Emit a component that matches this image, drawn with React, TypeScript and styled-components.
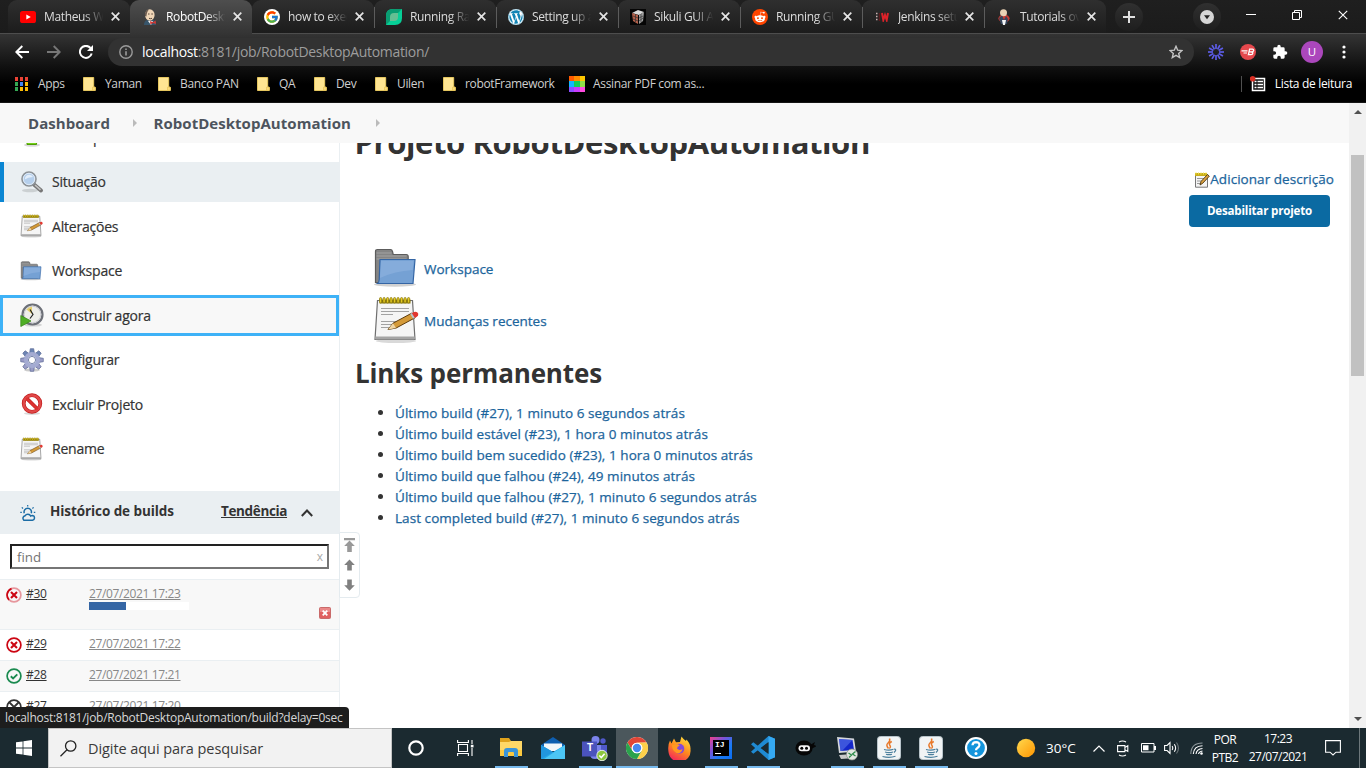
import React from "react";
import styled, { createGlobalStyle, css } from "styled-components";
import { FcGoogle } from "react-icons/fc";
import { FaWordpress, FaRedditAlien } from "react-icons/fa";

const UI = `"Open Sans", "Noto Sans", sans-serif`;

const Global = createGlobalStyle`
  * { box-sizing: border-box; }
  body { margin: 0; background: #fff; font-family: ${UI}; overflow: hidden; }
  svg { display: block; flex: none; }
  ul { margin: 0; padding: 0; }
`;

const Screen = styled.div`
  position: relative;
  width: 1366px;
  height: 768px;
  display: flex;
  flex-direction: column;
  overflow: hidden;
`;

/* ---------- browser chrome ---------- */

const TabStrip = styled.div`
  height: 34px;
  flex: none;
  display: flex;
  padding-left: 8px;
  background: linear-gradient(#1f1f1f, #1b1b1b);
  box-shadow: inset 0 -1px 0 #4d4d4d;
`;

const Tab = styled.div<{ $active?: boolean; $divider?: boolean }>`
  position: relative;
  width: 122px;
  height: 33px;
  display: flex;
  align-items: center;
  padding: 0 10px 0 12px;
  border-radius: 9px 9px 0 0;
  background: linear-gradient(#2f2f2f, #1c1c1c);
  ${(p) =>
    p.$active &&
    css`
      height: 34px;
      padding-bottom: 1px;
      background: linear-gradient(#4e4e4e, #343434);
    `}
  ${(p) =>
    p.$divider &&
    css`
      &::before {
        content: "";
        position: absolute;
        left: 0;
        top: 7px;
        width: 1px;
        height: 21px;
        background: #5c5c5c;
      }
    `}
`;

const Favicon = styled.span`
  width: 16px;
  height: 16px;
  display: flex;
  align-items: center;
  justify-content: center;
`;

const TabTitle = styled.span<{ $active?: boolean }>`
  width: 60px;
  margin-left: 8px;
  overflow: hidden;
  white-space: nowrap;
  font-size: 12px;
  line-height: 17px;
  letter-spacing: -0.35px;
  color: ${(p) => (p.$active ? "#fff" : "#dcdcdc")};
  mask-image: linear-gradient(90deg, #000 66%, transparent 99%);
`;

const CloseSlot = styled.span`
  margin-left: auto;
`;

const RoundButton = styled.div<{ $gap: number }>`
  width: 28px;
  height: 28px;
  margin: 3px 0 0 ${(p) => p.$gap}px;
  border-radius: 50%;
  display: flex;
  align-items: center;
  justify-content: center;
  background: linear-gradient(#303030, #1e1e1e);
`;

const WindowButtons = styled.div`
  margin-left: auto;
  display: flex;
  height: 29px;
`;

const WindowButton = styled.div`
  width: 46px;
  display: flex;
  align-items: center;
  justify-content: center;
`;

const Bars = styled.div`
  height: 69px;
  flex: none;
  background: linear-gradient(#343434 0, #111 32px, #000 50px);
  border-bottom: 1px solid #151515;
`;

const Toolbar = styled.div`
  height: 36px;
  display: flex;
  align-items: center;
`;

const NavSlot = styled.div<{ $w?: number }>`
  width: ${(p) => p.$w ?? 32}px;
  display: flex;
  justify-content: center;
  align-items: center;
`;

const NavGroup = styled.div`
  display: flex;
  padding-left: 6px;
  width: 108px;
`;

const Omnibox = styled.div`
  width: 1086px;
  height: 28px;
  border-radius: 14px;
  background: #323232;
  display: flex;
  align-items: center;
  padding: 0 10px;
  color: #9d9d9d;
`;

const Url = styled.span`
  margin-left: 8px;
  flex: 1;
  font-size: 14px;
  line-height: 20px;
  letter-spacing: -0.32px;
  b {
    font-weight: 400;
    color: #fff;
  }
`;

const Avatar = styled.span`
  width: 22px;
  height: 22px;
  border-radius: 50%;
  background: #ab47bc;
  color: #fff;
  font-size: 11.5px;
  line-height: 22px;
  text-align: center;
`;

const Bookmarks = styled.div`
  height: 27px;
  display: flex;
  align-items: center;
  padding-left: 15px;
`;

const Bookmark = styled.div<{ $w: number; $gap?: number }>`
  width: ${(p) => p.$w}px;
  display: flex;
  align-items: center;
  gap: ${(p) => p.$gap ?? 10}px;
  white-space: nowrap;
  font-size: 12px;
  line-height: 17px;
  color: #cfcfcf;
  letter-spacing: -0.34px;
`;

const ReadingList = styled.div`
  margin-left: auto;
  margin-right: 14px;
  padding-left: 8px;
  height: 16px;
  border-left: 1px solid #4f4f4f;
  display: flex;
  align-items: center;
  gap: 9px;
  font-size: 12px;
  color: #fff;
  white-space: nowrap;
  letter-spacing: -0.32px;
`;

/* ---------- jenkins page ---------- */

const Viewport = styled.div`
  height: 625px;
  flex: none;
  display: flex;
`;

const Page = styled.div`
  width: 1349px;
  display: flex;
  flex-direction: column;
  background: #fff;
`;

const Breadcrumbs = styled.div`
  height: 40px;
  flex: none;
  background: #f8f8f8;
  display: flex;
  align-items: center;
  padding-left: 28px;
`;

const Crumb = styled.span<{ $w: number }>`
  width: ${(p) => p.$w}px;
  font-size: 15px;
  line-height: 20px;
  font-weight: 700;
  letter-spacing: 0.04px;
  color: #4d545d;
  white-space: nowrap;
`;

const CrumbArrow = styled.span`
  width: 20.5px;
`;

const Columns = styled.div`
  height: 585px;
  display: flex;
  overflow: hidden;
`;

const Side = styled.aside`
  width: 340px;
  flex: none;
  border-right: 1px solid #eaeff2;
  display: flex;
  flex-direction: column;
`;

const Tasks = styled.nav`
  margin-top: -25.5px;
  display: flex;
  flex-direction: column;
  gap: 4.5px;
`;

const Task = styled.a<{ $state?: "current" | "focus" }>`
  height: 40px;
  flex: none;
  display: flex;
  align-items: center;
  gap: 8px;
  padding: 0 0 1px 20px;
  font-size: 14px;
  letter-spacing: -0.21px;
  -webkit-text-stroke: 0.2px #333;
  color: #333;
  ${(p) =>
    p.$state === "current" &&
    css`
      background: #eaeff2;
      border-left: 4px solid #0b86d3;
      padding-left: 16px;
    `}
  ${(p) =>
    p.$state === "focus" &&
    css`
      height: 41px;
      margin: -0.5px 0;
      background: #f8f8f8;
      box-shadow: inset 0 0 0 3px #3eb2f7;
    `}
`;

const HistoryHeader = styled.div`
  height: 43px;
  flex: none;
  margin-top: 22px;
  background: #eaeff2;
  display: flex;
  align-items: center;
  padding-left: 20px;
  font-size: 13.5px;
  font-weight: 700;
  letter-spacing: -0.08px;
  color: #333;
`;

const HistoryTitle = styled.span`
  width: 171px;
  margin: -3px 0 0 14px;
`;

const Trend = styled.a`
  width: 80px;
  margin-top: -3px;
  letter-spacing: -0.36px;
  text-decoration: underline;
`;

const FindBox = styled.div`
  height: 25px;
  flex: none;
  margin: 10px 10px 10px;
  border: 2px solid;
  border-color: #222 #767676 #767676 #222;
  display: flex;
  align-items: center;
  justify-content: space-between;
  padding: 0 4px 0 5px;
  font-size: 13.3px;
  color: #757575;
`;

const ClearMark = styled.span`
  font-size: 12px;
  color: #aaa;
`;

const Build = styled.div<{ $h: number; $odd?: boolean }>`
  height: ${(p) => p.$h}px;
  flex: none;
  display: flex;
  padding: 6px 0 0 6px;
  border-top: 1px solid #eaeff2;
  background: ${(p) => (p.$odd ? "#f8f8f8" : "#fff")};
  font-size: 12px;
  line-height: 16px;
`;

const BuildIcon = styled.span`
  width: 20px;
  padding-top: 1px;
`;

const BuildNo = styled.a`
  width: 63px;
  color: #333;
  letter-spacing: -0.3px;
  text-decoration: underline;
`;

const BuildDate = styled.a`
  display: block;
  width: max-content;
  color: #888;
  text-decoration: underline;
  letter-spacing: -0.37px;
`;

const Progress = styled.div`
  width: 100px;
  height: 8px;
  background: #fff;
`;

const ProgressFill = styled.div`
  height: 8px;
  background: #3465a4;
`;

const StopSlot = styled.span`
  margin: 21px 8px 0 auto;
`;

const Main = styled.main`
  flex: 1;
  padding: 0 15px 0 15px;
  display: flex;
  flex-direction: column;
  color: #333;
`;

const Title = styled.h1`
  margin: -23px 0 0 -0.5px;
  height: 44px;
  font-size: 31px;
  line-height: 44px;
  font-weight: 700;
  letter-spacing: -0.4px;
  white-space: nowrap;
`;

const Actions = styled.div`
  margin-top: 5px;
  display: flex;
  flex-direction: column;
  align-items: flex-end;
`;

const Link = styled.a`
  color: #1c659c;
  -webkit-text-stroke: 0.25px #1c659c;
  font-size: 13.5px;
  white-space: nowrap;
`;

const DescLink = styled(Link)`
  height: 21px;
  line-height: 21px;
  letter-spacing: 0.05px;
  display: flex;
  align-items: center;
`;

const DisableButton = styled.button`
  width: 141px;
  height: 32px;
  margin: 5px 4px 0 0;
  padding: 0;
  border: 0;
  border-radius: 4px;
  background: #0b6aa2;
  color: #fff;
  font: 700 11.6px/32px ${UI};
  letter-spacing: -0.2px;
`;

const Shortcuts = styled.div`
  margin: 15px 0 0 18px;
  display: flex;
  flex-direction: column;
`;

const Shortcut = styled.div`
  height: 52px;
  display: flex;
  align-items: center;
  gap: 3px;
`;

const ShortcutLink = styled(Link)`
  padding-top: 2px;
`;

const SubTitle = styled.h2`
  margin: 7px 0 0 0;
  height: 40px;
  font-size: 26px;
  line-height: 40px;
  font-weight: 700;
  letter-spacing: -0.15px;
`;

const Permalinks = styled.ul`
  margin-top: 9px;
  padding-left: 40px;
  li {
    height: 21px;
    line-height: 21px;
    font-size: 14px;
    letter-spacing: 0.06px;
  }
`;

const Scrollbar = styled.div`
  width: 17px;
  background: #f1f1f1;
  display: flex;
  flex-direction: column;
  align-items: center;
`;

const Thumb = styled.div`
  width: 13px;
  height: 221px;
  margin: 35px 0 auto;
  background: #c1c1c1;
`;

const ScrollArrowTop = styled.span`
  height: 17px;
  padding-top: 7px;
`;

const ScrollArrowBottom = styled.span`
  height: 17px;
  padding-top: 6px;
`;

const QuickNav = styled.div`
  position: absolute;
  left: 339px;
  top: 532px;
  width: 21px;
  height: 66px;
  border: 1px solid #e4ebef;
  border-radius: 0 4px 4px 0;
  background: #fff;
`;

const StatusBubble = styled.div`
  position: absolute;
  left: 0;
  top: 707px;
  width: 349px;
  height: 21px;
  padding-left: 5px;
  border-radius: 0 4px 0 0;
  background: #1d1d1d;
  color: #d8d8d8;
  font-size: 12px;
  line-height: 21px;
  letter-spacing: -0.26px;
  white-space: nowrap;
`;

/* ---------- windows taskbar ---------- */

const Taskbar = styled.div`
  height: 40px;
  flex: none;
  display: flex;
  background: #1b2a30;
  color: #fff;
`;

const Cell = styled.div<{ $w?: number; $active?: boolean; $run?: boolean }>`
  position: relative;
  width: ${(p) => p.$w ?? 42}px;
  height: 40px;
  flex: none;
  display: flex;
  align-items: center;
  justify-content: center;
  background: ${(p) => (p.$active ? "#4b575c" : "none")};
  ${(p) =>
    (p.$run || p.$active) &&
    css`
      &::after {
        content: "";
        position: absolute;
        bottom: 0;
        left: ${p.$active ? 0 : 5}px;
        right: ${p.$active ? 0 : 4}px;
        height: 2px;
        background: #76b9ed;
      }
    `}
`;

const SunCell = styled(Cell)`
  padding-left: 6px;
`;

const Search = styled.div`
  width: 344px;
  height: 40px;
  background: #f2f2f2;
  border: 1px solid #c4c4c4;
  display: flex;
  align-items: center;
  padding-left: 11px;
  gap: 11px;
  font-size: 14.5px;
  color: #3a3a3a;
  letter-spacing: -0.07px;
`;

const Temperature = styled.span`
  width: 42px;
  font-size: 13.5px;
  line-height: 40px;
`;

const Stack = styled.div<{ $w: number; $top: number }>`
  width: ${(p) => p.$w}px;
  padding-top: ${(p) => p.$top}px;
  text-align: center;
  font-size: 12px;
  line-height: 17.5px;
  letter-spacing: -0.52px;
  white-space: nowrap;
`;

const DesktopEdge = styled.div`
  width: 1px;
  margin-left: 7px;
  background: #6d777b;
`;

/* ---------- icons ---------- */

const CloseX = ({ s = 9, w = 1.7, c = "#e4e4e4" }) => (
  <svg width={s} height={s} viewBox="0 0 9 9" stroke={c} strokeWidth={w}>
    <path d="M.7.7l7.6 7.6M8.3.7L.7 8.3" />
  </svg>
);

const YouTube = () => (
  <svg width="16" height="12" viewBox="0 0 16 12">
    <rect width="16" height="12" rx="2.6" fill="#f00" />
    <path d="M6.3 3.4v5.2L10.8 6z" fill="#fff" />
  </svg>
);

const Butler = () => (
  <svg width="16" height="16" viewBox="0 0 16 16">
    <path d="M2 16q0-4 3-5l6-.5q3 1 3 5.5z" fill="#37556b" />
    <path d="M6 12l3 4 2-4z" fill="#f2f2f2" />
    <ellipse cx="7.8" cy="6" rx="4.8" ry="5.7" fill="#f0d6b7" />
    <path d="M3 7Q2 1.500 7 .4 4.800 2.500 4.400 7.500z" fill="#6b5b50" />
    <path d="M6 5h1.500M9.300 5h1.600M7 9.300q1.500.8 3 0" stroke="#46352c" strokeWidth=".9" fill="none" />
    <path d="M8 12l3 1.200 2.600-1.600.4 3.400-3-1-2.600 1.400z" fill="#d33833" />
  </svg>
);

const Leaf = () => (
  <svg width="16" height="16" viewBox="0 0 16 16">
    <path d="M0 16V7q0-7 7-7h9v9q0 7-7 7z" fill="#06cf97" />
    <path d="M0 7Q0 0 7 0h9L0 16z" fill="#0a9d72" />
    <path d="M4 12V8q0-4 4-4h4v4q0 4-4 4z" fill="#64bf93" />
  </svg>
);

const Cube = () => (
  <svg width="16" height="16" viewBox="0 0 16 16">
    <path d="M0 0h16v16H0z" fill="#050505" />
    <path d="M2 4l6-3 6 2-5 3z" fill="#d9d9d9" />
    <path d="M2 4l6 2v9l-5-3z" fill="#b5614b" />
    <path d="M9 6l5-3-1 9-4 3z" fill="#9f9f9f" />
    <path d="M3 7l5 2M3 10l5 2M9 9l4-2M9 12l4-3M5.500 5v8M11 5v8" stroke="#333" strokeWidth=".7" />
  </svg>
);

const RedditBadge = styled.span`
  width: 16px;
  height: 16px;
  border-radius: 50%;
  background: #ff4500;
  color: #fff;
  display: flex;
  align-items: center;
  justify-content: center;
`;

const WhiteDisc = styled.span<{ $c: string }>`
  width: 16px;
  height: 16px;
  border-radius: 50%;
  background: #fff;
  color: ${(p) => p.$c};
  display: flex;
  align-items: center;
  justify-content: center;
`;

const RedW = () => (
  <svg width="14" height="10" viewBox="0 0 14 10">
    <path d="M1 1.500h1.500M1 4.500h1.500M1 7.500h1.500" stroke="#c9b0b0" strokeWidth="1.500" />
    <path d="M4.500 1v8" stroke="#5a1c1e" strokeWidth="1.500" />
    <path d="M7 1l1.300 7 1.700-5 1.700 5L13 1" fill="none" stroke="#dc2229" strokeWidth="2" />
  </svg>
);

const Reader = () => (
  <svg width="16" height="16" viewBox="0 0 16 16">
    <ellipse cx="8" cy="9.500" rx="5.600" ry="4" fill="#c9382f" />
    <circle cx="7.500" cy="3.800" r="3.500" fill="#ead2b5" />
    <path d="M3 9l3-2.500L8 11l2-4 2 3-1 5H5z" fill="#34455c" />
    <path d="M6 11h4l-1 5H7z" fill="#f4f4f4" />
  </svg>
);

const Folder = () => (
  <svg width="13" height="14" viewBox="0 0 13 14">
    <path d="M.5.500h10.200v9.300l1.600.6v3.100H.5z" fill="#ffe592" stroke="#f0cf62" strokeWidth=".9" />
    <path d="M9.500 13.200v-3h2.800v3z" fill="#fbdc7c" stroke="#e4bd4c" strokeWidth=".6" />
  </svg>
);

const dots = ["#ea4335", "#ea4335", "#ea4335", "#34a853", "#4285f4", "#fbbc05", "#34a853", "#fbbc05", "#fbbc05"];
const AppsGrid = () => (
  <svg width="13" height="14" viewBox="0 0 13 14">
    {dots.map((c, i) => (
      <rect key={i} x={(i % 3) * 5} y={Math.floor(i / 3) * 5} width="3" height="4" fill={c} />
    ))}
  </svg>
);

const tiles = ["#ff5a00", "#ff8c00", "#ffc800", "#12b5ff", "#10d05a", "#8fe048", "#8c4dff", "#c93bff", "#ff4be0"];
const ColorTiles = () => (
  <svg width="16" height="16" viewBox="0 0 15 15" shapeRendering="crispEdges">
    {tiles.map((c, i) => (
      <rect key={i} x={(i % 3) * 5} y={Math.floor(i / 3) * 5} width="5" height="5" fill={c} />
    ))}
  </svg>
);

const Burst = () => (
  <svg width="16" height="16" viewBox="-8 -8 16 16" stroke="#5c5ce6" strokeWidth="1.700">
    {[...Array(12)].map((_, i) => (
      <path key={i} d="M0-3V-8" transform={`rotate(${i * 30})`} />
    ))}
  </svg>
);

const RedB = () => (
  <svg width="16" height="16" viewBox="0 0 16 16">
    <circle cx="8" cy="8" r="8" fill="#e5484d" />
    <path d="M1.500 6.800h6M3.500 9h3.500" stroke="#fff" strokeWidth="1.200" />
    <path d="M9.600 5.200h2.800q1.500.1 1.200 1.300-.3 1.300-1.700 1.400H9q3.800-.2 3.900 1.100-.2 1.700-1.900 1.700H8.400z" fill="none" stroke="#fff" strokeWidth="1.300" />
  </svg>
);

const Puzzle = () => (
  <svg width="16" height="16" viewBox="0 0 24 24" fill="#fff">
    <path d="M20.500 11H19V7a2 2 0 0 0-2-2h-4V3.500a2.500 2.500 0 0 0-5 0V5H4a2 2 0 0 0-2 2v3.800h1.500a2.700 2.700 0 0 1 0 5.400H2V20a2 2 0 0 0 2 2h3.800v-1.500a2.700 2.700 0 0 1 5.400 0V22H17a2 2 0 0 0 2-2v-4h1.500a2.500 2.500 0 0 0 0-5z" />
  </svg>
);

const ListIcon = () => (
  <svg width="16" height="16" viewBox="0 0 16 16">
    <path d="M2.500 2.500h12v12h-12z" fill="#111" stroke="#fff" strokeWidth="1.500" />
    <path d="M4.500 5.500h2M4.500 8.500h2M4.500 11.500h2M7.500 5.500h5.500M7.500 8.500h5.500M7.500 11.500h5.500" stroke="#fff" strokeWidth="1.300" />
    <circle cx="2.600" cy="2.800" r="2.800" fill="#d93025" />
  </svg>
);

const Magnifier = () => (
  <svg width="24" height="24" viewBox="0 0 24 24">
    <ellipse cx="10" cy="20.500" rx="8" ry="1.800" fill="#000" opacity=".13" />
    <path d="M14 14.500l7 6" stroke="#777" strokeWidth="4" strokeLinecap="round" />
    <path d="M15 15l5.500 4.800" stroke="#c4c4c4" strokeWidth="1.600" />
    <circle cx="9" cy="9" r="7" fill="#b5cfec" stroke="#8d9296" strokeWidth="1.600" />
    <circle cx="9" cy="9" r="5.700" fill="none" stroke="#dfeaf6" strokeWidth="1" />
    <path d="M4.800 9.500Q5 5 9.500 4.800 12 5 13 7 8 7 4.800 9.500z" fill="#e3eefa" />
  </svg>
);

const Notepad = ({ size = 24 }) => (
  <svg width={size} height={size} viewBox="0 0 48 48">
    <ellipse cx="23" cy="45" rx="20" ry="2" fill="#000" opacity=".15" />
    <path d="M4.500 4.500h35l2.500 39H2z" fill="#f5f5f5" stroke="#6f6f6f" strokeWidth="1.200" />
    <path d="M2.500 40.500h39v3h-39z" fill="#a5a5a5" />
    <path d="M6.500 3.500h31v4h-31z" fill="#8b7a14" />
    {[...Array(9)].map((_, i) => (
      <rect key={i} x={6.5 + i * 3.5} y="1.500" width="2.200" height="5.500" rx="1.100" fill="#e3c922" stroke="#776600" strokeWidth=".6" />
    ))}
    <path d="M8 12.500h28M8 15.500h28M8 18.500h12M8 25.500h16M8 28.500h12M8 31.500h9" stroke="#a2a2a2" strokeWidth="1.100" />
    <path d="M15 33.500l5-6.300 19-10.200 3.200 4.700-19 10.300z" fill="#d49a38" stroke="#5d3b0c" strokeWidth="1" />
    <path d="M15 33.500l5-6.300 3 4.800z" fill="#efd5a4" />
    <path d="M38.500 17.300l2.600-1.400q3.200-.8 4.200 1.900.3 2.200-1.800 3.200l-2.100 1.100z" fill="#e2372f" />
    <path d="M37.200 18l1.600-.9 2.900 4.700-1.600.9z" fill="#b9c3cc" />
  </svg>
);

const SmallPad = () => (
  <svg width="16" height="16" viewBox="0 0 16 16">
    <path d="M1.500 2.500h12v12.700h-12z" fill="#f4f4f4" stroke="#777" />
    <path d="M1 1h12v3H1z" fill="#c7ad18" />
    <path d="M2 .5v2M4.500.5v2M7 .5v2M9.500.5v2M12 .5v2" stroke="#f0dd4c" />
    <path d="M3 6.500h7M3 9h5M3 11.500h3" stroke="#999" />
    <path d="M6 13l1-3.500 6.500-7 1.800 1.700-6.500 7z" fill="#dba23f" stroke="#4c3510" strokeWidth=".9" />
  </svg>
);

const BlueFolder = ({ size = 24 }) => (
  <svg width={size} height={size} viewBox="0 0 48 48">
    <ellipse cx="22" cy="40.500" rx="21" ry="2.200" fill="#000" opacity=".18" />
    <path d="M2.500 38.500v-31q0-2 2-2h13q1.500 0 2 2l.7 3h13q2 0 2 2v26z" fill="#858585" stroke="#5c5c5c" strokeWidth="1.200" />
    <path d="M3.500 9h15M3.500 12h30M3.500 15h30" stroke="#a3a3a3" strokeWidth="1" />
    <path d="M7 15.500h35l-2 24H4.500q1.500-1 1.700-4z" fill="#75a1d4" stroke="#3465a4" strokeWidth="1.200" />
    <path d="M8 17h32.500l-.8 9Q22 27 7 34z" fill="#8bb1de" opacity=".7" />
  </svg>
);

const ClockRun = () => (
  <svg width="24" height="24" viewBox="0 0 24 24">
    <ellipse cx="13" cy="22" rx="9" ry="1.600" fill="#000" opacity=".15" />
    <circle cx="12.500" cy="11.500" r="10" fill="#eeeeea" stroke="#6d7078" strokeWidth="2.200" />
    <circle cx="12.500" cy="11.500" r="8.300" fill="none" stroke="#cacbd2" strokeWidth="1" />
    <path d="M12 11L6.500 6.500Q9 3.500 12 3.700z" fill="#e5cf6c" />
    <path d="M10 6.500l3 5-3 4" fill="none" stroke="#222" strokeWidth="1.200" />
    <path d="M.8 12.500L11 18 .8 23.500z" fill="#4fae25" stroke="#3c8a1c" strokeWidth=".8" />
  </svg>
);

const Gear = () => (
  <svg width="24" height="24" viewBox="-12 -12 24 24">
    <ellipse cx="0" cy="10" rx="8" ry="1.600" fill="#000" opacity=".2" />
    {[...Array(8)].map((_, i) => (
      <path key={i} d="M-2.500-6L-1.700-11.300H1.700L2.500-6z" transform={`rotate(${i * 45})`} fill={i < 2 || i > 6 ? "#6c85b4" : "#9a9cc6"} stroke="#5c6a96" strokeWidth=".7" />
    ))}
    <circle r="6" fill="none" stroke="#a4abd2" strokeWidth="4" />
    <circle r="3.600" fill="#fff" stroke="#67759f" strokeWidth=".9" />
  </svg>
);

const Forbidden = () => (
  <svg width="24" height="24" viewBox="0 0 24 24">
    <ellipse cx="12" cy="21.500" rx="8" ry="1.500" fill="#000" opacity=".15" />
    <circle cx="12" cy="11.500" r="8.300" fill="#fff" stroke="#c21d1d" strokeWidth="3.800" />
    <path d="M6.200 5.900l11.600 11.400" stroke="#c21d1d" strokeWidth="3.600" />
    <circle cx="12" cy="11.500" r="8.300" fill="none" stroke="#e04848" strokeWidth="2.400" />
    <path d="M6.200 5.900l11.600 11.400" stroke="#dd3030" strokeWidth="2.500" />
  </svg>
);

const GreenArrow = () => (
  <svg width="24" height="24" viewBox="0 0 24 24">
    <ellipse cx="12" cy="20" rx="8" ry="1.800" fill="#000" opacity=".15" />
    <path d="M12 1l8 9h-3.500v9.500H7V10H4z" fill="#73d216" stroke="#4e9a06" />
  </svg>
);

const Weather = () => (
  <svg width="16" height="16" viewBox="0 0 16 16" fill="none" stroke="#1b6ca5" strokeWidth="1.500">
    <path d="M4.300 8.300a3.700 3.700 0 1 1 6.900 0" />
    <path d="M3.800 15.200h8.700a2.400 2.400 0 0 0 .2-4.700q-1.300 0-2 .5a3.200 3.200 0 0 0-5.600-.3 2.600 2.600 0 0 0-1.300 4.500z" fill="#eaeff2" />
    <path d="M7.700 0v1.500M1.800 2.400l1.200 1.100M13.600 2.400l-1.200 1.100M.3 7.300h1.500M13.800 7.300h1.500" strokeWidth="1.200" />
  </svg>
);

const StatusIcon = ({ kind }: { kind: "running" | "failed" | "ok" | "aborted" }) => {
  const c = kind === "ok" ? "#1a8a4f" : kind === "aborted" ? "#333" : "#cc0613";
  return (
    <svg width="16" height="16" viewBox="0 0 16 16" fill="none" stroke={c}>
      <circle cx="8" cy="8" r="6.900" strokeWidth="1.700" opacity={kind === "running" ? 0.4 : 1} />
      {kind === "running" && <path d="M3 12.800A6.900 6.900 0 0 1 5.500 1.600" strokeWidth="1.700" />}
      {kind === "ok" && <path d="M4.800 8.200l2.300 2.200 4.200-4" strokeWidth="1.900" />}
      {kind === "aborted" && <path d="M3 3l10 10M13 3L3 13" strokeWidth="1.800" />}
      {(kind === "failed" || kind === "running") && <path d="M5 5l6 6M11 5l-6 6" strokeWidth="2.100" />}
    </svg>
  );
};

const StopIcon = () => (
  <svg width="12" height="12" viewBox="0 0 12 12">
    <rect x=".5" y=".5" width="11" height="11" rx="1" fill="#e06060" stroke="#c96a6a" />
    <path d="M1 1h10v4H1z" fill="#ee9a9a" opacity=".7" />
    <path d="M3.700 3.700l4.600 4.600M8.300 3.700L3.700 8.300" stroke="#fff" strokeWidth="1.800" />
  </svg>
);

const Explorer = () => (
  <svg width="24" height="22" viewBox="0 0 24 22">
    <path d="M1 1h9l2 3h11v15H1z" fill="#e0a31c" />
    <path d="M1 5h9l2-1h11v15H1z" fill="#ffd867" />
    <path d="M1 13h22v6H1z" fill="#fbc940" />
    <path d="M5 20v-6q0-3 3-3h8q3 0 3 3v6h-4v-4q0-1-1-1h-4q-1 0-1 1v4z" fill="#3a94d8" />
  </svg>
);

const Mail = () => (
  <svg width="24" height="22" viewBox="0 0 24 22">
    <path d="M0 8l12-8 12 8v2H0z" fill="#0f5fb0" />
    <path d="M3 6.500h18V14H3z" fill="#f3f7fa" />
    <path d="M0 8l12 7 12-7v14H0z" fill="#27a6e8" />
    <path d="M24 8L3 22h21z" fill="#4cc6f5" />
    <path d="M0 22V8l12 7z" fill="#2196de" />
  </svg>
);

const TeamsLetter = styled.span`
  position: absolute;
  left: 8px;
  top: 12px;
  width: 16px;
  font: 700 10px/16px "Liberation Sans", sans-serif;
  text-align: center;
`;

const Teams = () => (
  <svg width="26" height="25" viewBox="0 0 26 25">
    <circle cx="21" cy="5" r="2.700" fill="#5059c9" />
    <circle cx="13.500" cy="4" r="4" fill="#7b83eb" />
    <path d="M18 9h7v8q-1 3-4 3h-3z" fill="#5059c9" />
    <path d="M8 9h11v9q-1 5-6 5t-5-5z" fill="#7b83eb" />
    <path d="M0 5.500h15v15H0z" fill="#4b53bc" />
    <circle cx="20" cy="19.500" r="5.200" fill="#8cc63e" stroke="#fff" strokeWidth=".8" />
    <path d="M17.300 19.500l2 2 3.300-3.700" fill="none" stroke="#fff" strokeWidth="1.600" />
  </svg>
);

const Chrome = () => (
  <svg width="22" height="22" viewBox="-11 -11 22 22">
    <circle r="11" fill="#fff" />
    <path d="M-9.530-5.500A11 11 0 0 1 9.530-5.500L0-5.300A5.300 5.300 0 0 0-4.600 2.650z" fill="#e04637" />
    <path d="M9.530-5.500A11 11 0 0 1 0 11L4.600 2.650A5.300 5.300 0 0 0 0-5.300z" fill="#fdd04a" />
    <path d="M0 11A11 11 0 0 1-9.530-5.500L-4.600 2.650A5.300 5.300 0 0 0 4.600 2.650z" fill="#2ba24c" />
    <circle r="5.300" fill="#fff" />
    <circle r="4.200" fill="#4688f1" />
  </svg>
);

const Firefox = () => (
  <svg width="24" height="24" viewBox="0 0 24 24">
    <defs>
      <linearGradient id="ff" x1=".8" y1="0" x2=".3" y2="1">
        <stop offset="0" stopColor="#ffe03a" />
        <stop offset=".5" stopColor="#ff8a1e" />
        <stop offset="1" stopColor="#f3225f" />
      </linearGradient>
    </defs>
    <path d="M3 4.500l1.500 3L7 2.500l2 3.800 4-.3 1.500-5.500q2 3 4.500 4.500l.5-1.500q4.500 5 4 10A11 11 0 0 1 1.500 16Q.5 9 3 4.500z" fill="url(#ff)" />
    <circle cx="12.300" cy="12.800" r="5" fill="#8448d8" />
    <path d="M5 9l5.500-1 2.300 1.500Q10 10.500 10 12.500 12 15 15.500 13 14.500 18 9.500 17 5 14.500 5 9z" fill="#ff9a20" />
  </svg>
);

const IjBox = styled.span`
  width: 22px;
  height: 22px;
  padding: 3px;
  background: linear-gradient(135deg, #f0408a 0, #7a53d8 35%, #1b7cf5 65%, #0a6cf2);
  display: flex;
`;

const IjInner = styled.span`
  width: 16px;
  height: 16px;
  background: #000;
  padding: 1px 0 0 2px;
  font: 700 8px/8px "Liberation Mono", monospace;
  color: #fff;
  &::after {
    content: "";
    display: block;
    width: 6px;
    height: 1px;
    margin-top: 4px;
    background: #fff;
  }
`;

const VsCode = () => (
  <svg width="24" height="24" viewBox="0 0 24 24">
    <path d="M17.500 6v12L2.300 6.300 0 8.300l2.200 2L17.500 24 24 21.200V2.800L17.500 0 2.200 13.700 0 15.700l2.300 2z" fill="#1f8ad2" />
    <path d="M17.500 0L24 2.800v18.400L17.500 24z" fill="#35a9f2" />
    <path d="M17.500 6.300v11.400L10 12z" fill="#1b2a30" />
  </svg>
);

const Ninja = () => (
  <svg width="22" height="16" viewBox="-1 0 22 16">
    <path d="M15 5l5-3-1 3 3 1-6 3z" fill="#060606" />
    <ellipse cx="9" cy="8" rx="8.600" ry="7.600" fill="#060606" />
    <rect x="3.500" y="5.300" width="11.500" height="6" rx="3" fill="#f4f4f4" />
    <circle cx="6.800" cy="8.300" r="1.500" />
    <circle cx="11.500" cy="8.300" r="1.500" />
  </svg>
);

const Remote = () => (
  <svg width="24" height="25" viewBox="0 0 24 25">
    <path d="M4 19l14-1 2 4-14 1z" fill="#c9c9c9" />
    <path d="M2 1l17 1.500 2 13L4 17z" fill="#d5d8dc" />
    <path d="M4 3l13.500 1L19 14 5.500 15z" fill="#1427c9" />
    <path d="M4 3l13.500 1L7 15l-1.500 0z" fill="#5774ea" opacity=".6" />
    <circle cx="17" cy="18.500" r="5.500" fill="#e3e7e2" stroke="#8a8f88" strokeWidth=".7" />
    <path d="M13.500 17l3 2-2.500 2.500M20.500 15.500L17.500 18l3 2" fill="none" stroke="#2e8b4a" strokeWidth="1.300" />
  </svg>
);

const Java = () => (
  <svg width="24" height="24" viewBox="0 0 24 24">
    <rect x=".5" y=".5" width="23" height="23" rx="3" fill="#f1f4f5" stroke="#b8c4ca" />
    <path d="M12.500 2.500q1 2.500-1.500 4.500t.5 5.500M14.800 5.500q-3.500 2-2 3.800t-.5 3.200" fill="none" stroke="#e8792b" strokeWidth="1.500" />
    <path d="M7 13.500q5 1.400 9.500-.2M8 16q4 1.300 8 0M9 18.200q3 1 6 0M5.500 20.500q7 1.800 13-.2M17 13q3.500 0 0 3.500" fill="none" stroke="#4b7f9c" strokeWidth="1.200" />
  </svg>
);

const Help = () => (
  <svg width="24" height="24" viewBox="0 0 24 24">
    <circle cx="12" cy="12" r="10" fill="#1495dc" stroke="#fff" strokeWidth="2.200" />
    <path d="M8.500 9.300q.2-3.200 3.600-3.200 3.500.2 3.300 3.100-.2 1.600-2 2.700-1.400.9-1.400 2.400" fill="none" stroke="#fff" strokeWidth="2.300" />
    <circle cx="12" cy="17.400" r="1.500" fill="#fff" />
  </svg>
);

/* ---------- data ---------- */

const tabs = [
  { t: "Matheus Wi", i: <YouTube /> },
  { t: "RobotDeskt", i: <Butler />, active: true },
  { t: "how to exec", i: <WhiteDisc $c="#4285f4"><FcGoogle size={14} /></WhiteDisc> },
  { t: "Running Ra", i: <Leaf /> },
  { t: "Setting up a", i: <WhiteDisc $c="#1285b5"><FaWordpress size={16} /></WhiteDisc> },
  { t: "Sikuli GUI A", i: <Cube /> },
  { t: "Running GU", i: <RedditBadge><FaRedditAlien size={12} /></RedditBadge> },
  { t: "Jenkins setu", i: <RedW /> },
  { t: "Tutorials ov", i: <Reader /> },
];

const bookmarks: [string, number][] = [
  ["Yaman", 75],
  ["Banco PAN", 99],
  ["QA", 57],
  ["Dev", 61],
  ["Uilen", 68],
  ["robotFramework", 126],
];

const links = [
  "Último build (#27), 1 minuto 6 segundos atrás",
  "Último build estável (#23), 1 hora 0 minutos atrás",
  "Último build bem sucedido (#23), 1 hora 0 minutos atrás",
  "Último build que falhou (#24), 49 minutos atrás",
  "Último build que falhou (#27), 1 minuto 6 segundos atrás",
  "Last completed build (#27), 1 minuto 6 segundos atrás",
];

export default function App() {
  return (
    <Screen>
      <Global />
      <TabStrip>
        {tabs.map((t, i) => (
          <Tab key={t.t} $active={t.active} $divider={i > 2}>
            <Favicon>{t.i}</Favicon>
            <TabTitle $active={t.active}>{t.t}</TabTitle>
            <CloseSlot><CloseX /></CloseSlot>
          </Tab>
        ))}
        <RoundButton $gap={9}>
          <svg width="12" height="12" viewBox="0 0 12 12" stroke="#e0e0e0" strokeWidth="2"><path d="M6 0v12M0 6h12" /></svg>
        </RoundButton>
        <RoundButton $gap={50}>
          <svg width="14" height="14" viewBox="0 0 14 14"><circle cx="7" cy="7" r="7" fill="#d6d6d6" /><path d="M4 5.300h6L7 9.300z" fill="#222" /></svg>
        </RoundButton>
        <WindowButtons>
          <WindowButton><svg width="10" height="10"><path d="M0 4.500h10" stroke="#fff" /></svg></WindowButton>
          <WindowButton>
            <svg width="10" height="10" fill="none" stroke="#fff"><path d="M.5 2.500h7v7h-7zM2.500 2.500v-2h7v7h-2" /></svg>
          </WindowButton>
          <WindowButton><CloseX s={10} w={1} c="#fff" /></WindowButton>
        </WindowButtons>
      </TabStrip>
      <Bars>
        <Toolbar>
          <NavGroup>
            <NavSlot><svg width="14" height="14" viewBox="0 0 14 14" fill="none" stroke="#fff" strokeWidth="1.900"><path d="M14 7H1.500M7.300 1L1.300 7l6 6" /></svg></NavSlot>
            <NavSlot><svg width="14" height="14" viewBox="0 0 14 14" fill="none" stroke="#777" strokeWidth="1.900"><path d="M0 7h12.500M6.700 1l6 6-6 6" /></svg></NavSlot>
            <NavSlot>
              <svg width="14" height="14" viewBox="0 0 14 14"><path d="M12.700 8.500A6 6 0 1 1 11.500 3" fill="none" stroke="#fff" strokeWidth="2" /><path d="M14 0v6H8z" fill="#fff" /></svg>
            </NavSlot>
          </NavGroup>
          <Omnibox>
            <NavSlot $w={16}>
              <svg width="14" height="14" viewBox="0 0 14 14" fill="none" stroke="#9b9b9b" strokeWidth="1.400"><circle cx="7" cy="7" r="6.200" /><path d="M7 6.200v4.200M7 3.600v1.500" strokeWidth="1.600" /></svg>
            </NavSlot>
            <Url><b>localhost</b>:8181/job/RobotDesktopAutomation/</Url>
            <NavSlot $w={16}>
              <svg width="14" height="14" viewBox="0 0 14 14" fill="none" stroke="#c4c4c4" strokeWidth="1.400"><path d="M7 1.300l1.700 3.900 4.200.4-3.200 2.800 1 4.200L7 10.400l-3.700 2.200 1-4.200L1.100 5.600l4.200-.4z" /></svg>
            </NavSlot>
          </Omnibox>
          <NavSlot $w={6} />
          <NavSlot><Burst /></NavSlot>
          <NavSlot><RedB /></NavSlot>
          <NavSlot><Puzzle /></NavSlot>
          <NavSlot><Avatar>U</Avatar></NavSlot>
          <NavSlot><svg width="4" height="14" fill="#fff"><circle cx="2" cy="2" r="1.600" /><circle cx="2" cy="7" r="1.600" /><circle cx="2" cy="12" r="1.600" /></svg></NavSlot>
        </Toolbar>
        <Bookmarks>
          <Bookmark $w={68}><AppsGrid />Apps</Bookmark>
          {bookmarks.map(([t, w]) => (
            <Bookmark key={t} $w={w} $gap={9}><Folder />{t}</Bookmark>
          ))}
          <Bookmark $w={140} $gap={8}><ColorTiles />Assinar PDF com as...</Bookmark>
          <ReadingList><ListIcon />Lista de leitura</ReadingList>
        </Bookmarks>
      </Bars>

      <Viewport>
        <Page>
          <Breadcrumbs>
            <Crumb $w={105}>Dashboard</Crumb>
            <CrumbArrow><svg width="4" height="8"><path d="M0 0l4 4-4 4z" fill="#bbb" /></svg></CrumbArrow>
            <Crumb $w={222.5}>RobotDesktopAutomation</Crumb>
            <CrumbArrow><svg width="4" height="8"><path d="M0 0l4 4-4 4z" fill="#bbb" /></svg></CrumbArrow>
          </Breadcrumbs>
          <Columns>
            <Side>
              <Tasks>
                <Task><GreenArrow />Voltar para o Dashboard</Task>
                <Task $state="current"><Magnifier />Situação</Task>
                <Task><Notepad />Alterações</Task>
                <Task><BlueFolder />Workspace</Task>
                <Task $state="focus"><ClockRun />Construir agora</Task>
                <Task><Gear />Configurar</Task>
                <Task><Forbidden />Excluir Projeto</Task>
                <Task><Notepad />Rename</Task>
              </Tasks>
              <HistoryHeader>
                <Weather />
                <HistoryTitle>Histórico de builds</HistoryTitle>
                <Trend>Tendência</Trend>
                <svg width="12" height="8" viewBox="0 0 12 8" fill="none" stroke="#333" strokeWidth="2"><path d="M.8 7L6 1.500 11.200 7" /></svg>
              </HistoryHeader>
              <FindBox>find<ClearMark>x</ClearMark></FindBox>
              <Build $h={50} $odd>
                <BuildIcon><StatusIcon kind="running" /></BuildIcon>
                <BuildNo>#30</BuildNo>
                <div>
                  <BuildDate>27/07/2021 17:23</BuildDate>
                  <Progress><ProgressFill style={{ width: "37%" }} /></Progress>
                </div>
                <StopSlot><StopIcon /></StopSlot>
              </Build>
              <Build $h={31}><BuildIcon><StatusIcon kind="failed" /></BuildIcon><BuildNo>#29</BuildNo><BuildDate>27/07/2021 17:22</BuildDate></Build>
              <Build $h={31} $odd><BuildIcon><StatusIcon kind="ok" /></BuildIcon><BuildNo>#28</BuildNo><BuildDate>27/07/2021 17:21</BuildDate></Build>
              <Build $h={31}><BuildIcon><StatusIcon kind="aborted" /></BuildIcon><BuildNo>#27</BuildNo><BuildDate>27/07/2021 17:20</BuildDate></Build>
            </Side>
            <Main>
              <Title>Projeto RobotDesktopAutomation</Title>
              <Actions>
                <DescLink><SmallPad />Adicionar descrição</DescLink>
                <DisableButton>Desabilitar projeto</DisableButton>
              </Actions>
              <Shortcuts>
                <Shortcut><BlueFolder size={48} /><ShortcutLink>Workspace</ShortcutLink></Shortcut>
                <Shortcut><Notepad size={48} /><ShortcutLink>Mudanças recentes</ShortcutLink></Shortcut>
              </Shortcuts>
              <SubTitle>Links permanentes</SubTitle>
              <Permalinks>{links.map((l) => <li key={l}><Link>{l}</Link></li>)}</Permalinks>
            </Main>
          </Columns>
        </Page>
        <Scrollbar>
          <ScrollArrowTop><svg width="8" height="4"><path d="M0 4l4-4 4 4z" fill="#505050" /></svg></ScrollArrowTop>
          <Thumb />
          <ScrollArrowBottom><svg width="8" height="4"><path d="M0 0l4 4 4-4z" fill="#505050" /></svg></ScrollArrowBottom>
        </Scrollbar>
      </Viewport>

      <Taskbar>
        <Cell $w={48}><svg width="16" height="16" viewBox="0 0 16 16" fill="#fff"><path d="M0 2.300L6.600 1.400v6.200H0zM7.400 1.300L16 0v7.600H7.400zM0 8.400h6.600v6.200L0 13.700zM7.400 8.400H16V16l-8.600-1.300z" /></svg></Cell>
        <Search>
          <svg width="17" height="17" viewBox="0 0 17 17" fill="none" stroke="#222" strokeWidth="1.300"><circle cx="10.700" cy="6" r="5.200" /><path d="M7 9.800L.5 16.300" /></svg>
          Digite aqui para pesquisar
        </Search>
        <Cell $w={48}><svg width="16" height="16"><circle cx="8" cy="8" r="6.700" fill="none" stroke="#fff" strokeWidth="2.200" /></svg></Cell>
        <Cell $w={50}>
          <svg width="19" height="16" viewBox="0 0 17 16" fill="none" stroke="#fff" strokeWidth="1.100"><path d="M1.500 4.500h9v7h-9zM.6 0v2.500h10.800V0M.6 16v-2.500h10.800V16M15 0v4M15 8v8" /><path d="M13.800 4.800h2.700v2.600h-2.700z" fill="#fff" stroke="none" /></svg>
        </Cell>
        <Cell $run><Explorer /></Cell>
        <Cell><Mail /></Cell>
        <Cell $run><Teams /><TeamsLetter>T</TeamsLetter></Cell>
        <Cell $active><Chrome /></Cell>
        <Cell><Firefox /></Cell>
        <Cell $run><IjBox><IjInner>IJ</IjInner></IjBox></Cell>
        <Cell $run><VsCode /></Cell>
        <Cell><Ninja /></Cell>
        <Cell $run><Remote /></Cell>
        <Cell $run><Java /></Cell>
        <Cell $run><Java /></Cell>
        <Cell $w={48}><Help /></Cell>
        <SunCell $w={46}>
          <svg width="20" height="20"><defs><linearGradient id="sun" x1="0" y1="0" x2="1" y2="1"><stop offset="0" stopColor="#ffd94f" /><stop offset="1" stopColor="#ff9500" /></linearGradient></defs><circle cx="10" cy="10" r="9.200" fill="url(#sun)" /></svg>
        </SunCell>
        <Temperature>30°C</Temperature>
        <Cell $w={22}><svg width="12" height="7" fill="none" stroke="#fff" strokeWidth="1.200"><path d="M.5 6.500L6 1l5.500 5.500" /></svg></Cell>
        <Cell $w={26}>
          <svg width="12" height="17" viewBox="0 0 12 17" fill="none" stroke="#fff" strokeWidth="1.100"><path d="M.6 5.600h7.300v6H.6zM7.900 7.500l2.900-1.700v5.600L7.900 9.800M2 2q3.500-2 7 0M2 15q3.500 2 7 0" /></svg>
        </Cell>
        <Cell $w={24}><svg width="15" height="10"><path d="M.5.500h12.500v8.500H.5z" fill="none" stroke="#fff" /><path d="M2 2.300h5.500v5H2zM13 3h2v4h-2z" fill="#fff" /></svg></Cell>
        <Cell $w={24}>
          <svg width="16" height="14" viewBox="0 0 16 14" fill="none" stroke="#fff" strokeWidth="1.100"><path d="M.6 4.500h2.500L6 1.500v11l-2.900-3H.6zM8.200 5q1.300 2 0 4" /><path d="M10.300 3.200q2.700 3.800 0 7.600" /><path d="M12.500 1.500q4 5.500 0 11" stroke="#6b7579" /></svg>
        </Cell>
        <Cell $w={24}>
          <svg width="13" height="13" viewBox="0 0 13 13" fill="none" stroke="#fff" strokeWidth="1.100"><path d="M.8 12Q1 1 12.500 1" stroke="#8d979b" /><path d="M3.300 12q.5-8 9.200-8.300M6 12q.6-5 6.500-5.500M8.500 12q.4-2.500 4-3" /><circle cx="11.500" cy="11.500" r="1.300" fill="#fff" stroke="none" /></svg>
        </Cell>
        <Stack $w={34} $top={3}>POR<br />PTB2</Stack>
        <Stack $w={72} $top={2}>17:23<br />27/07/2021</Stack>
        <Cell $w={38}><svg width="16" height="16" fill="none" stroke="#fff" strokeWidth="1.100"><path d="M.6.600h14.800v11.600H11L8 15l-3-2.800H.6z" /></svg></Cell>
        <DesktopEdge />
      </Taskbar>

      <QuickNav>
        <svg width="19" height="64" viewBox="0 0 19 64" fill="#999">
          <path d="M4 5h11v2.200H4zM9.500 7.500l5.300 5.500h-3v6h-4.600v-6h-3z" />
          <path d="M9.500 26.500l5.300 5.500h-3v5.500h-4.600V32h-3zM9.500 57.800L4.200 52.300h3v-5.800h4.600v5.800h3z" fill="#808080" />
        </svg>
      </QuickNav>
      <StatusBubble>localhost:8181/job/RobotDesktopAutomation/build?delay=0sec</StatusBubble>
    </Screen>
  );
}
